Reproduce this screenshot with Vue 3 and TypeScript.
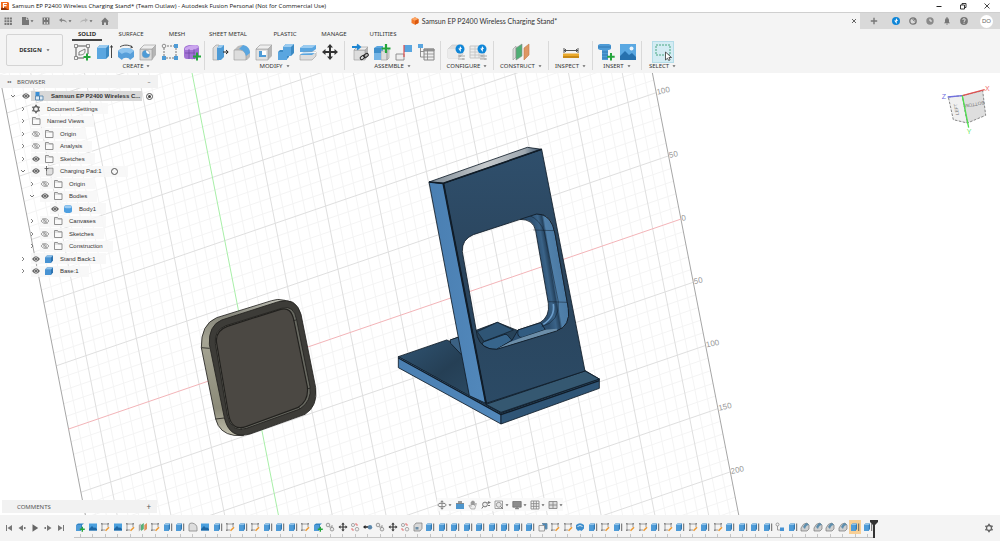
<script setup lang="ts">
import { computed, ref } from 'vue'

interface ToolGroup {
  label: string
  tools: string[]
}
interface TreeNode {
  id: number
  label: string
  depth: number
  icon: string
  caret: 'open' | 'closed' | 'none'
  eye: 'on' | 'off' | 'none'
  radio?: 'on' | 'off'
}
interface Segment {
  x1: number
  y1: number
  x2: number
  y2: number
}

const documentName = 'Samsun EP P2400 Wireless Charging Stand*'

const tabs = ['SOLID', 'SURFACE', 'MESH', 'SHEET METAL', 'PLASTIC', 'MANAGE', 'UTILITIES']
const activeTab = ref('SOLID')

const groups: ToolGroup[] = [
  { label: 'CREATE', tools: ['sketch-new', 'extrude', 'revolve', 'hole', 'pattern', 'form'] },
  { label: 'MODIFY', tools: ['press-pull', 'fillet', 'shell', 'combine', 'split', 'move'] },
  { label: 'ASSEMBLE', tools: ['insert-link', 'component-new', 'joint', 'bom'] },
  { label: 'CONFIGURE', tools: ['config-cube', 'config-table'] },
  { label: 'CONSTRUCT', tools: ['plane'] },
  { label: 'INSPECT', tools: ['measure'] },
  { label: 'INSERT', tools: ['fastener', 'image'] },
  { label: 'SELECT', tools: ['select'] },
]

const nodes: TreeNode[] = [
  { id: 1, label: 'Document Settings', depth: 1, icon: 'gear', caret: 'closed', eye: 'none' },
  { id: 2, label: 'Named Views', depth: 1, icon: 'folder', caret: 'closed', eye: 'none' },
  { id: 3, label: 'Origin', depth: 1, icon: 'folder', caret: 'closed', eye: 'off' },
  { id: 4, label: 'Analysis', depth: 1, icon: 'folder', caret: 'closed', eye: 'off' },
  { id: 5, label: 'Sketches', depth: 1, icon: 'folder', caret: 'closed', eye: 'on' },
  { id: 6, label: 'Charging Pad:1', depth: 1, icon: 'component', caret: 'open', eye: 'on', radio: 'off' },
  { id: 7, label: 'Origin', depth: 2, icon: 'folder', caret: 'closed', eye: 'off' },
  { id: 8, label: 'Bodies', depth: 2, icon: 'folder', caret: 'open', eye: 'on' },
  { id: 9, label: 'Body1', depth: 3, icon: 'body', caret: 'none', eye: 'on' },
  { id: 10, label: 'Canvases', depth: 2, icon: 'folder', caret: 'closed', eye: 'off' },
  { id: 11, label: 'Sketches', depth: 2, icon: 'folder', caret: 'closed', eye: 'off' },
  { id: 12, label: 'Construction', depth: 2, icon: 'folder', caret: 'closed', eye: 'off' },
  { id: 13, label: 'Stand Back:1', depth: 1, icon: 'block', caret: 'closed', eye: 'on' },
  { id: 14, label: 'Base:1', depth: 1, icon: 'block', caret: 'closed', eye: 'on' },
]

const codes: Record<string, string> = {
  n: 't-new', i: 't-image', s: 't-sketch', p: 't-plane', e: 't-extrude', f: 't-round', c: 't-chain',
  m: 't-move', r: 't-chain-red', d: 't-dot', h: 't-shell', o: 't-out', v: 't-revolve', j: 't-rigid', g: 't-fillet',
}
const history = 'nisispseefiesesee' + 'esncmrdcmrh' + 'eeeeeeeee' + 'ossv' + 'esessesesese' + 'eeejeggggee'
const features = computed(() => history.split('').map((c) => codes[c]))
const highlighted = 62

const transport = ['first', 'prev', 'play', 'next', 'last']
const navTools = [
  { icon: 'orbit', menu: true }, { icon: 'look', menu: false }, { icon: 'pan', menu: false },
  { icon: 'zoom', menu: false }, { icon: 'fit', menu: true }, { icon: 'display', menu: true },
  { icon: 'grid', menu: true }, { icon: 'viewports', menu: true },
]

/* Ground plane: origin, one 50 mm step along each axis, and the extents in steps. */
const origin = { x: 249.5, y: 367 }
const u = { x: 50.4, y: -17.28 }
const v = { x: 12.35, y: 63.2 }
const uMin = -3.59
const uMax = 8.56
const vMin = -6
const vMax = 5

function seg(u1: number, v1: number, u2: number, v2: number): Segment {
  return {
    x1: origin.x + u.x * u1 + v.x * v1,
    y1: origin.y + u.y * u1 + v.y * v1,
    x2: origin.x + u.x * u2 + v.x * v2,
    y2: origin.y + u.y * u2 + v.y * v2,
  }
}
const minor: Segment[] = []
const major: Segment[] = []
for (let i = vMin * 5; i <= vMax * 5; i++) {
  if (i !== 0) (i % 5 === 0 ? major : minor).push(seg(uMin, i / 5, uMax, i / 5))
}
for (let i = Math.ceil(uMin * 5); i <= uMax * 5; i++) {
  if (i !== 0) (i % 5 === 0 ? major : minor).push(seg(i / 5, vMin, i / 5, vMax))
}
const xAxis = seg(uMin, 0, uMax, 0)
const yAxis = seg(0, vMin, 0, vMax)
const edges = [seg(uMin, vMin, uMin, vMax), seg(uMax, vMin, uMax, vMax)]
const rulerLabels = [-2, -1, 0, 1, 2, 3, 4].map((n) => {
  const p = seg(uMax, n, uMax, n)
  return { text: String(Math.abs(n * 50)), at: `translate(${p.x1 + 1} ${p.y1 + 2}) rotate(-12)` }
})
</script>

<template>
  <svg class="sprite" aria-hidden="true">
    <symbol id="logo" viewBox="0 0 10 10"><path d="M1 1h7l1 1v7H1z" fill="#f26a1b" /><path d="M1 7l3-1 5 3H1z" fill="#8c3208" /><path d="M3.5 7V2.5H7M3.5 4.7h3" stroke="#fff" stroke-width="1.2" fill="none" /></symbol>
    <symbol id="apps" viewBox="0 0 10 10"><path d="M1.5 1.5h2v2h-2zM4.2 1.5h2v2h-2zM6.9 1.5h2v2h-2zM1.5 4.2h2v2h-2zM4.2 4.2h2v2h-2zM6.9 4.2h2v2h-2zM1.5 6.9h2v2h-2zM4.2 6.9h2v2h-2zM6.9 6.9h2v2h-2z" fill="#777" /></symbol>
    <symbol id="file" viewBox="0 0 10 10"><path d="M2 1h4v3h3v5H2z" fill="#777" /><path d="M6.7 1L9 3.4H6.7z" fill="#777" /></symbol>
    <symbol id="save" viewBox="0 0 10 10"><path d="M1.5 1.5h7v7h-7z" fill="#777" /><path d="M3 2h1v2H3zM6 2h1v2H6zM3 6h1.4v2H3zM5.6 6H7v2H5.600z" fill="#d0d0d0" /></symbol>
    <symbol id="undo" viewBox="0 0 10 10"><path d="M1 4l3-2v1.400c3 0 4.500 1.300 5 3.600C7.800 5.600 6.500 5 4 5v1.400z" fill="#888" /></symbol>
    <symbol id="redo" viewBox="0 0 10 10"><path d="M9 4L6 2v1.400C3 3.400 1.500 4.700 1 7 2.200 5.600 3.500 5 6 5v1.400z" fill="#b5b5b5" /></symbol>
    <symbol id="home" viewBox="0 0 10 10"><path d="M5 1.500l4 4H8V9H6V6.500H4V9H2V5.500H1z" fill="#777" /></symbol>
    <symbol id="caret" viewBox="0 0 4 4"><path d="M.5 1.200h3L2 3.200z" fill="#666" /></symbol>
    <symbol id="min" viewBox="0 0 8 8"><path d="M1.500 4.500h5" stroke="#222" stroke-width="1" /></symbol>
    <symbol id="restore" viewBox="0 0 8 8"><path d="M1.500 3h4v4h-4zM3 3V1.500h4v4H5.500" fill="none" stroke="#222" stroke-width=".9" /></symbol>
    <symbol id="close" viewBox="0 0 8 8"><path d="M1.500 1.500l5 5M6.500 1.500l-5 5" stroke="#333" stroke-width=".9" /></symbol>
    <symbol id="tabclose" viewBox="0 0 8 8"><path d="M2 2l4 4M6 2L2 6" stroke="#555" stroke-width=".9" /></symbol>
    <symbol id="plus" viewBox="0 0 8 8"><path d="M4 .8v6.400M.8 4h6.400" stroke="#777" stroke-width="1.400" /></symbol>
    <symbol id="bolt" viewBox="0 0 10 10"><circle cx="5" cy="5" r="4" fill="#0f86d8" /><path d="M5 2l2 3H5.700v3L3.200 4.600h1.600z" fill="#fff" /></symbol>
    <symbol id="ext" viewBox="0 0 10 10"><circle cx="5" cy="5" r="3.200" fill="none" stroke="#777" stroke-width="1.300" /><path d="M5 5l2-2M3.800 3.200H7V6" stroke="#777" fill="none" stroke-width=".8" /></symbol>
    <symbol id="clock" viewBox="0 0 10 10"><circle cx="5" cy="5" r="3.700" fill="#8a8a8a" /><path d="M5 2.800V5h2" stroke="#eee" fill="none" /></symbol>
    <symbol id="bell" viewBox="0 0 10 10"><path d="M2 7.300l1-1.300V4a2 2 0 0 1 4 0v2l1 1.300zM4 7.800h2L5 9zM4.500 1h1v1h-1z" fill="#777" /></symbol>
    <symbol id="help" viewBox="0 0 10 10"><circle cx="5" cy="5" r="3.900" fill="#777" /><path d="M3.800 4c0-1.800 2.600-1.500 2.400 0C6.100 4.900 5 4.900 5 5.900M5 6.700v1" stroke="#eee" fill="none" /></symbol>
    <symbol id="doc-cube" viewBox="0 0 8 8"><path d="M4 .3l3.500 1.700v4L4 7.800.5 6V2z" fill="#f47a2b" /><path d="M4 .3l3.500 1.700L4 3.800.5 2z" fill="#fba566" /><path d="M4 3.800L7.500 2v4L4 7.800z" fill="#d9580f" /></symbol>

    <symbol id="sketch-new" viewBox="0 0 18 18"><path d="M3 3h12M3 3v12M3 15h8M15 3v8" stroke="#555" fill="none" /><path d="M1.500 1.500h3v3h-3zM13.500 1.500h3v3h-3zM1.500 13.500h3v3h-3z" fill="#f4f4f4" stroke="#666" stroke-width=".7" /><path d="M12 6v2c0 3-2 4-6 4h-.5M6 12V9l6-3" fill="none" stroke="#666" stroke-width=".8" /><path d="M14 10.500v7M10.500 14h7" stroke="#25a53c" stroke-width="2" /></symbol>
    <symbol id="extrude" viewBox="0 0 18 18"><path d="M2 5l3-3h9v11l-3 3H2z" fill="#3b8ac4" /><path d="M2 5h9v11H2z" fill="#5aa6e0" /><path d="M2 5l3-3h9l-3 3z" fill="#9acbf0" /><path d="M16.500 15V3M15.300 4.500l1.200-2 1.200 2" stroke="#333" stroke-width=".9" fill="none" /></symbol>
    <symbol id="revolve" viewBox="0 0 18 18"><path d="M1 8c3-4 13-4 16 0v6l-4 3c-1-3-7-3-8 0l-4-3z" fill="#579fda" /><path d="M1 8c3-4 13-4 16 0l-4 3c-2-2-6-2-8 0z" fill="#8dc4ef" /><path d="M3 4c3-2.500 9-2.500 12 0M14 2.500l1.500 2-2 .3" stroke="#333" stroke-width=".9" fill="none" /></symbol>
    <symbol id="hole" viewBox="0 0 18 18"><path d="M1 6l4-4h12v10l-4 5H1z" fill="#b5b5b5" /><path d="M1 6h12v11H1z" fill="#d9d9d9" stroke="#999" stroke-width=".6" /><path d="M1 6l4-4h12l-4 4z" fill="#eee" stroke="#999" stroke-width=".6" /><circle cx="7" cy="11" r="3.800" fill="#fff" stroke="#888" stroke-width=".6" /><path d="M7 7.200a3.800 3.800 0 1 0 3.800 3.800C8 11 7 10 7 7.200z" fill="#4e9bd6" /></symbol>
    <symbol id="pattern" viewBox="0 0 18 18"><path d="M6 3h7M3 5v8M5 15h8M15 5v8" stroke="#777" stroke-dasharray="2 1" /><path d="M13 1h4v4h-4zM1 13h4v4H1zM13 13h4v4h-4z" fill="#4e9bd6" /><circle cx="3" cy="3" r="1.800" fill="#f4f4f4" stroke="#777" stroke-width=".8" /></symbol>
    <symbol id="form" viewBox="0 0 18 18"><path d="M1 6q0-3 5-4h7q3 0 3 3v8q-4 4-8 3H4q-3 0-3-3z" fill="#a273d4" /><path d="M2 5q4-3 11-3l3 2-5 3H2z" fill="#cba6ee" /><path d="M2 10h10M6 6v10M11 6v10l5-3" stroke="#6f45a5" stroke-width=".7" fill="none" /><path d="M14 9.500v8M10 13.500h8" stroke="#25a53c" stroke-width="2" /></symbol>
    <symbol id="press-pull" viewBox="0 0 18 18"><path d="M2 5l3-3h3v15H2z" fill="#ddd" stroke="#999" stroke-width=".6" /><path d="M6 5l3-3h4v12l-3 3H6z" fill="#4e9bd6" /><path d="M6 5l3-3h4l-3 3z" fill="#9acbf0" /><path d="M12 9h5M15 7l2.200 2L15 11" stroke="#222" fill="none" /></symbol>
    <symbol id="fillet" viewBox="0 0 18 18"><path d="M1 7l4-4 4-1c5 1 8 4 8 9v3l-3 3H1z" fill="#bdbdbd" /><path d="M1 7h5c5 0 7 3 7 7v3H1z" fill="#ddd" stroke="#999" stroke-width=".6" /><path d="M6 6l4-4c5 1 7 4 7 8l-4 3c-1-4-3-6-7-7z" fill="#5aa6e0" /></symbol>
    <symbol id="shell" viewBox="0 0 18 18"><path d="M1 6l4-4h12v11l-4 4H1z" fill="#b5b5b5" /><path d="M1 6h12v11H1z" fill="#e1e1e1" stroke="#999" stroke-width=".6" /><path d="M1 6l4-4h12l-4 4z" fill="#eee" stroke="#999" stroke-width=".6" /><path d="M4 8h7v6H4z" fill="#4e9bd6" /><path d="M7 8h4v4H7z" fill="#fff" /></symbol>
    <symbol id="combine" viewBox="0 0 18 18"><path d="M6 4l3-3h8v9l-3 3h-2v1l-3 3H1V9l2-2h3z" fill="#3b8ac4" /><path d="M6 4h8v9h-4v4H1V9h5z" fill="#5aa6e0" /><path d="M6 4l3-3h8l-3 3z" fill="#9acbf0" /></symbol>
    <symbol id="split" viewBox="0 0 18 18"><path d="M1 5l4-3h12v4l-4 3H1z" fill="#5aa6e0" /><path d="M1 5l4-3h12l-4 3z" fill="#9acbf0" /><path d="M1 12l4-3h12v4l-4 4H1z" fill="#ddd" stroke="#999" stroke-width=".6" /><path d="M1 12l4-3h12l-4 3z" fill="#5aa6e0" /><path d="M1 10l16-.500" stroke="#fff" /></symbol>
    <symbol id="move" viewBox="0 0 18 18"><path d="M9 1l3 3.500h-2V8h3.500V6L17 9l-3.500 3v-2H10v3.500h2L9 17l-3-3.500h2V10H4.500v2L1 9l3.500-3v2H8V4.500H6z" fill="#333" /></symbol>
    <symbol id="insert-link" viewBox="0 0 18 18"><path d="M3 7l3-3h11v9l-3 4H3z" fill="#b5b5b5" /><path d="M3 7h11v10H3z" fill="#ddd" stroke="#999" stroke-width=".6" /><path d="M3 7l3-3h11l-3 3z" fill="#eee" stroke="#999" stroke-width=".6" /><path d="M1 4h7M6 1.500L9 4 6 6.500" stroke="#1e86d2" stroke-width="1.800" fill="none" /><g fill="none" stroke="#222"><rect x="9" y="13" width="5" height="3" rx="1.500" transform="rotate(-35 11.500 14.500)" /><rect x="12.500" y="11" width="5" height="3" rx="1.500" transform="rotate(-35 15 12.500)" /></g></symbol>
    <symbol id="component-new" viewBox="0 0 18 18"><path d="M1 5l3-2h6v6H1z" fill="#5aa6e0" /><path d="M8 8h6v9H8zM14 8l2-1.500V15l-2 2z" fill="#ddd" stroke="#999" stroke-width=".6" /><path d="M1 5h7v5H1z" fill="#3f8fcb" /><path d="M1 10h7v7H1z" fill="#75b5e6" /><path d="M13 1v9M8.500 5.500h9" stroke="#25a53c" stroke-width="2.200" /></symbol>
    <symbol id="joint" viewBox="0 0 18 18"><path d="M9 2h8v7H9z" fill="#5aa6e0" /><path d="M1 11h8v6H1z" fill="#eee" stroke="#888" stroke-width=".9" /><path d="M9 2v12" stroke="#e05050" stroke-width="1.200" /></symbol>
    <symbol id="bom" viewBox="0 0 18 18"><path d="M1 1h5v4H1z" fill="#5aa6e0" /><path d="M3.500 5v9H7M3.500 8.500H7" stroke="#777" fill="none" stroke-width=".8" /><path d="M7 6h10v11H7z" fill="#eee" stroke="#888" /><path d="M7 6h10v2H7zM7 11h10M7 14h10M10.500 6v11" stroke="#888" stroke-width=".8" fill="#999" /></symbol>
    <symbol id="config-cube" viewBox="0 0 18 18"><path d="M1 6l4-4h11v9l-4 4H1z" fill="#ddd" stroke="#c4c4c4" stroke-width=".6" /><path d="M1 6h10v9H1z" fill="#ebebeb" /><path d="M11 13h7M11 16h7M13 12v2M16 15v2" stroke="#999" stroke-width=".8" /><circle cx="13" cy="6" r="4.500" fill="#0f86d8" /><path d="M13 3l2 3h-1.200v3l-2.600-3.500h1.500z" fill="#fff" /></symbol>
    <symbol id="config-table" viewBox="0 0 18 18"><path d="M1 3h14v12H1z" fill="#eee" stroke="#c4c4c4" /><path d="M1 6h14M1 9h14M1 12h14M6 3v12M10 3v12" stroke="#c4c4c4" stroke-width=".9" /><path d="M11 13h7M11 16h7M13 12v2M16 15v2" stroke="#999" stroke-width=".8" /><circle cx="13" cy="6" r="4.500" fill="#0f86d8" /><path d="M13 3l2 3h-1.200v3l-2.600-3.500h1.500z" fill="#fff" /></symbol>
    <symbol id="plane" viewBox="0 0 18 18"><path d="M1 6l3-3v11l-3 3z" fill="#ddd" stroke="#999" stroke-width=".6" /><path d="M4 5l6-4v12l-6 4z" fill="#4fae74" stroke="#888" stroke-width=".6" /><path d="M12 5l5-4v11l-5 5z" fill="#de9663" stroke="#c27a48" stroke-width=".6" /></symbol>
    <symbol id="measure" viewBox="0 0 18 18"><path d="M2 5v5M16 5v5M2 7.500h14M4 6L2.500 7.500 4 9M14 6l1.500 1.500L14 9" stroke="#444" stroke-width=".9" fill="none" /><path d="M1 10.500h16v4.500H1z" fill="#eaa92c" /><path d="M1 13h16v2H1z" fill="#c98a17" /></symbol>
    <symbol id="fastener" viewBox="0 0 18 18"><path d="M1 2l2-1h9l2 1v4l-2 1h-1v10H5V7H3L1 6z" fill="#4e9bd6" /><path d="M5 9h6M5 12h6M5 15h6M1 4h13" stroke="#2b6ea8" stroke-width=".8" /><path d="M14 10v7.500M10.200 13.700h7.500" stroke="#25a53c" stroke-width="2" /></symbol>
    <symbol id="image" viewBox="0 0 18 18"><path d="M1 1h16v16H1z" fill="#5aa8e2" /><path d="M1 13l5-5 4 4 3-2 4 4v3H1z" fill="#2671ae" /><circle cx="12.500" cy="5.500" r="2" fill="#e9f4fc" /></symbol>
    <symbol id="select" viewBox="0 0 18 18"><path d="M2 2h14v10H2z" fill="none" stroke="#4aa680" stroke-dasharray="2 1" /><path d="M11.500 9v8l2-1.800 1.200 2.300 1.400-.7-1.200-2.300H17.500z" fill="#fff" stroke="#333" stroke-width=".8" /></symbol>

    <symbol id="eye-on" viewBox="0 0 10 10"><path d="M1 5q4-5.500 8 0-4 5.500-8 0z" fill="#666" /><circle cx="5" cy="5" r="1.700" fill="#eee" /><circle cx="5" cy="5" r="1" fill="#444" /></symbol>
    <symbol id="eye-off" viewBox="0 0 10 10"><path d="M1 5q4-5 8 0-4 5-8 0z" fill="none" stroke="#909090" stroke-width=".8" /><circle cx="5" cy="5" r="1.400" fill="none" stroke="#909090" stroke-width=".7" /><path d="M2.500 2l5 6" stroke="#909090" stroke-width=".8" /></symbol>
    <symbol id="closed" viewBox="0 0 6 6"><path d="M2 1l2 2-2 2" fill="none" stroke="#666" stroke-width=".8" /></symbol>
    <symbol id="open" viewBox="0 0 6 6"><path d="M1 2l2 2 2-2" fill="none" stroke="#666" stroke-width=".9" /></symbol>
    <symbol id="folder" viewBox="0 0 10 10"><path d="M1.500 8.500v-7h3l.800 1.300h3.700v5.700z" fill="#fafafa" stroke="#777" stroke-width=".8" /><path d="M1.500 3h7" stroke="#999" stroke-width=".5" /></symbol>
    <symbol id="gear" viewBox="0 0 10 10"><circle cx="5" cy="5" r="2.500" fill="none" stroke="#666" stroke-width="1.300" /><path d="M5 .8v1.500M5 7.700v1.500M1.400 2.900l1.300.8M7.300 6.300l1.300.8M1.400 7.100l1.300-.8M7.300 3.700l1.300-.8" stroke="#666" stroke-width="1.700" /></symbol>
    <symbol id="component" viewBox="0 0 10 10"><path d="M2.500 3.500L4 2.200h5v5L7.500 9h-5z" fill="#e0e0e0" stroke="#777" stroke-width=".7" /><path d="M2.500 0v5M.5 2.500h4" stroke="#555" stroke-width=".8" /></symbol>
    <symbol id="body" viewBox="0 0 10 10"><path d="M1 3q0-2 4-2t4 2v4q0 2-4 2T1 7z" fill="#4e9fe0" /><ellipse cx="5" cy="2.800" rx="3.800" ry="1.500" fill="#9dccf2" /></symbol>
    <symbol id="block" viewBox="0 0 10 10"><path d="M1 3.500l2-2h6v5l-2 2.500H1z" fill="#2d73b0" /><path d="M1 3.500h6V9H1z" fill="#4793d3" /><path d="M1 3.500l2-2h6l-2 2z" fill="#8bc1ec" /></symbol>
    <symbol id="root" viewBox="0 0 10 10"><path d="M1.500 1h4v4h-4z" fill="#3a8fd6" /><path d="M1.500 5h4v4h-4zM5.500 5h3.500v4H5.500z" fill="#ddeaf4" stroke="#4b7ea8" stroke-width=".8" /></symbol>

    <symbol id="t-extrude" viewBox="0 0 10 10"><path d="M1 3l1.500-1.500H7V7L5.500 9H1z" fill="#2f78b3" /><path d="M1 3h4.800v6H1z" fill="#4f9cd8" /><path d="M1 3l1.500-1.500H7.200L5.800 3z" fill="#8fc3ea" /><path d="M8.700 9V1.500" stroke="#555" stroke-width=".9" /></symbol>
    <symbol id="t-new" viewBox="0 0 10 10"><path d="M1 3l2-1.500h6L7 3v5H1z" fill="#2f83c4" /><path d="M1 3h5v6H1z" fill="#4f9cd8" /><path d="M7.300 4.800v5M4.800 7.300h5" stroke="#25a53c" stroke-width="1.400" /></symbol>
    <symbol id="t-image" viewBox="0 0 10 10"><path d="M1 1.500h8v7H1z" fill="#4ba0de" /><path d="M1 7l3-3 2 2 1-.7 2 1.700v1.500H1z" fill="#1e67a4" /></symbol>
    <symbol id="t-sketch" viewBox="0 0 10 10"><path d="M2 2h6M2 2v6h3M8 2v3" fill="none" stroke="#888" stroke-width=".8" /><path d="M1 1h1.600v1.600H1zM7.400 1H9v1.600H7.400zM1 7.400h1.600V9H1z" fill="#888" /><path d="M5.500 8.800L9 5.200" stroke="#ec9a35" stroke-width="1.600" /></symbol>
    <symbol id="t-plane" viewBox="0 0 10 10"><path d="M.8 3l2-1.500v6l-2 2z" fill="#aaa" /><path d="M3 3l2.800-2v6L3 9z" fill="#56b078" /><path d="M6.300 3l2.700-2v6L6.300 9z" fill="#dc925d" /></symbol>
    <symbol id="t-round" viewBox="0 0 10 10"><path d="M1 3q0-2 3-2 5 1 5 5v3H1z" fill="#ddd" stroke="#888" stroke-width=".8" /></symbol>
    <symbol id="t-fillet" viewBox="0 0 10 10"><path d="M1 9V6q2-5 6-5l2 2v4L7 9z" fill="#d0d0d0" stroke="#777" stroke-width=".7" /><path d="M3 5q2-4 4-4l2 2q-3 0-4 4z" fill="#5f8fae" /></symbol>
    <symbol id="t-move" viewBox="0 0 10 10"><path d="M5 .5L6.700 2.500H5.600v1.900h1.900V3.300L9.500 5l-2 1.700V5.600H5.600v1.900h1.100L5 9.500 3.300 7.500h1.100V5.600H2.500v1.100L.5 5l2-1.700v1.100h1.900V2.500H3.300z" fill="#333" /></symbol>
    <symbol id="t-chain" viewBox="0 0 10 10"><g fill="#e8e8e8" stroke="#888" stroke-width=".8"><circle cx="3" cy="3" r="1.800" /><circle cx="7" cy="7.200" r="1.800" /><path d="M4 5h3v-2" fill="none" /></g></symbol>
    <symbol id="t-chain-red" viewBox="0 0 10 10"><g fill="#eee" stroke="#999" stroke-width=".8"><circle cx="3" cy="3" r="1.600" /><circle cx="7" cy="7.200" r="1.800" /></g><path d="M5 2h2v2M2 6v2h2" stroke="#e36a6a" fill="none" stroke-width=".9" /></symbol>
    <symbol id="t-dot" viewBox="0 0 10 10"><path d="M0 5l2.500-2v1.300H6v1.400H2.500V7z" fill="#222" /><circle cx="7" cy="5.200" r="2.200" fill="#5b87ab" /></symbol>
    <symbol id="t-shell" viewBox="0 0 10 10"><path d="M1 3.500L3 1h6v5.500L7 9H1z" fill="#d8d8d8" stroke="#777" stroke-width=".7" /><path d="M2.500 5h3v2.500h-3z" fill="#6b8ea7" /></symbol>
    <symbol id="t-out" viewBox="0 0 10 10"><path d="M4 1.500h5V7H7" fill="#4a87b8" stroke="#6b8ea7" /><path d="M1 3.500h5.500V9H1z" fill="#f1f1f1" stroke="#888" stroke-width=".8" /></symbol>
    <symbol id="t-revolve" viewBox="0 0 10 10"><path d="M1 3q4-3.500 8 0v3.500L6.500 9Q5 7.500 3 9L1 6.500z" fill="#3e8ecd" /><path d="M2.500 4.500q2.500-2 5 0" stroke="#d8ebf8" fill="none" /></symbol>
    <symbol id="t-rigid" viewBox="0 0 10 10"><circle cx="2.500" cy="2.500" r="1.500" fill="none" stroke="#888" stroke-width=".8" /><path d="M2.500 4v4H5" fill="none" stroke="#888" stroke-width=".8" /><path d="M5 5.500h4V9H5z" fill="#4793d3" /></symbol>

    <symbol id="first" viewBox="0 0 8 8"><path d="M1 1h1v6H1zM7 1v6L2.500 4z" fill="#777" /></symbol>
    <symbol id="prev" viewBox="0 0 8 8"><path d="M5 1v6L.5 4zM6 3h1.500v2H6z" fill="#777" /></symbol>
    <symbol id="play" viewBox="0 0 8 8"><path d="M1.500.2v7.600L7.200 4z" fill="#666" /></symbol>
    <symbol id="next" viewBox="0 0 8 8"><path d="M3 1v6l4.500-3zM.5 3H2v2H.5z" fill="#777" /></symbol>
    <symbol id="last" viewBox="0 0 8 8"><path d="M6 1h1v6H6zM1 1v6l4.500-3z" fill="#777" /></symbol>

    <symbol id="orbit" viewBox="0 0 10 10"><ellipse cx="5" cy="5" rx="4.200" ry="1.800" fill="none" stroke="#777" stroke-width=".9" /><path d="M5 .8v8.400M3.500 2.300L5 .8l1.500 1.500M3.500 7.700L5 9.200l1.500-1.500" stroke="#777" fill="none" stroke-width=".9" /></symbol>
    <symbol id="look" viewBox="0 0 10 10"><path d="M1 3.500h8V9H1z" fill="#4e96cd" /><path d="M3 1h4v2.500H3z" fill="#999" /><path d="M1 3.500h8" stroke="#777" stroke-width=".8" /></symbol>
    <symbol id="pan" viewBox="0 0 10 10"><path d="M3 9L.8 5.500l1-.3L3 6.500V2.200h.8V5V1.200h.9V5 1h.9v4V1.800h.9V5.500l1-2h.9L7.300 7.300 6.800 9z" fill="#eee" stroke="#888" stroke-width=".6" /></symbol>
    <symbol id="zoom" viewBox="0 0 10 10"><circle cx="4" cy="4.500" r="2.400" fill="#eee" stroke="#777" /><path d="M2.300 6.300L.8 8.500M7.800 1v3M6.500 2.500h3M7 5.500h2" stroke="#777" /></symbol>
    <symbol id="fit" viewBox="0 0 10 10"><path d="M1 1h7.500v7.500H1z" fill="none" stroke="#888" stroke-width=".8" /><circle cx="4.800" cy="4.800" r="2.500" fill="#e5e5e5" stroke="#888" stroke-width=".8" /><path d="M6.500 6.500L9 9" stroke="#777" /></symbol>
    <symbol id="display" viewBox="0 0 10 10"><path d="M.8 1.500h8.400v5.700H.8z" fill="#8c8c8c" stroke="#666" stroke-width=".7" /><path d="M3 8.700h4M5 7v2" stroke="#777" /></symbol>
    <symbol id="grid" viewBox="0 0 10 10"><path d="M1 1h8v8H1zM1 3.700h8M1 6.300h8M3.700 1v8M6.300 1v8" stroke="#888" stroke-width=".9" fill="none" /></symbol>
    <symbol id="viewports" viewBox="0 0 10 10"><path d="M1 1.500h8v7H1z" fill="#ddd" stroke="#888" stroke-width=".9" /><path d="M1 5h8M5 1.500v7" stroke="#888" stroke-width=".9" /></symbol>
  </svg>

  <div class="shell-window">
    <header class="titlebar">
      <svg class="ic10"><use href="#logo" /></svg>
      <h1>Samsun EP P2400 Wireless Charging Stand* (Team Outlaw) - Autodesk Fusion Personal (Not for Commercial Use)</h1>
      <div class="window-buttons">
        <button aria-label="Minimize"><svg class="ic8"><use href="#min" /></svg></button>
        <button aria-label="Restore"><svg class="ic8"><use href="#restore" /></svg></button>
        <button aria-label="Close window"><svg class="ic8"><use href="#close" /></svg></button>
      </div>
    </header>

    <div class="docbar">
      <div class="quick">
        <button aria-label="Data panel"><svg class="ic10"><use href="#apps" /></svg></button>
        <button aria-label="File"><svg class="ic10"><use href="#file" /></svg><svg class="ic4"><use href="#caret" /></svg></button>
        <button aria-label="Save"><svg class="ic10"><use href="#save" /></svg></button>
        <button aria-label="Undo"><svg class="ic10"><use href="#undo" /></svg><svg class="ic4"><use href="#caret" /></svg></button>
        <button aria-label="Redo"><svg class="ic10"><use href="#redo" /></svg><svg class="ic4"><use href="#caret" /></svg></button>
        <button aria-label="Home"><svg class="ic10"><use href="#home" /></svg></button>
      </div>
      <div class="doctab">
        <div class="docname"><svg class="ic8"><use href="#doc-cube" /></svg><span>{{ documentName }}</span></div>
        <button aria-label="Close document"><svg class="ic8"><use href="#tabclose" /></svg></button>
      </div>
      <div class="account">
        <button class="new-doc" aria-label="New document"><svg class="ic8"><use href="#plus" /></svg></button>
        <button v-for="i in ['bolt', 'ext', 'clock', 'bell', 'help']" :key="i" :aria-label="i">
          <svg class="ic10"><use :href="'#' + i" /></svg>
        </button>
        <button class="avatar">DO</button>
      </div>
    </div>

    <div class="ribbon">
      <button class="workspace">DESIGN <svg class="ic4"><use href="#caret" /></svg></button>
      <div class="ribbon-body">
        <nav class="tabs">
          <button v-for="t in tabs" :key="t" :class="{ active: t === activeTab }" @click="activeTab = t">{{ t }}</button>
        </nav>
        <div class="groups">
          <section v-for="g in groups" :key="g.label" class="group">
            <div class="tools">
              <button v-for="t in g.tools" :key="t" :aria-label="t" :class="{ chosen: t === 'select' }">
                <svg><use :href="'#' + t" /></svg>
              </button>
            </div>
            <button class="group-label">{{ g.label }} <svg class="ic4"><use href="#caret" /></svg></button>
          </section>
        </div>
      </div>
    </div>

    <main class="viewport">
      <svg class="scene" viewBox="0 73 1000 442" preserveAspectRatio="xMinYMin slice">
        <defs>
          <linearGradient id="front" x1="0" y1="0" x2="0" y2="1"><stop offset="0" stop-color="#2f4f6c" /><stop offset=".5" stop-color="#2a445c" /><stop offset="1" stop-color="#2b4a65" /></linearGradient>
          <linearGradient id="base" x1="0" y1="0" x2="1" y2=".6"><stop offset="0" stop-color="#335a7b" /><stop offset=".4" stop-color="#253f55" /><stop offset="1" stop-color="#355a78" /></linearGradient>
          <linearGradient id="topface" x1="0" y1="0" x2="1" y2="0"><stop offset="0" stop-color="#7e8b96" /><stop offset=".5" stop-color="#c5c9cc" /><stop offset=".85" stop-color="#9fa8b0" /><stop offset="1" stop-color="#35506a" /></linearGradient>
          <linearGradient id="rim" gradientUnits="userSpaceOnUse" x1="450" y1="400" x2="510" y2="390"><stop offset="0" stop-color="#2c4f70" /><stop offset=".35" stop-color="#3a6388" /><stop offset=".55" stop-color="#25425d" /><stop offset=".65" stop-color="#5080aa" /><stop offset="1" stop-color="#4c7ba5" /></linearGradient>
          <linearGradient id="side" x1="0" y1="0" x2="1" y2="0"><stop offset="0" stop-color="#4a7fb2" /><stop offset="1" stop-color="#5288bb" /></linearGradient>
          <linearGradient id="padside" x1="0" y1="0" x2="0" y2="1"><stop offset="0" stop-color="#c0c1b6" /><stop offset=".12" stop-color="#85857a" /><stop offset=".3" stop-color="#a6a594" /><stop offset=".8" stop-color="#8c8b79" /><stop offset="1" stop-color="#c1bfae" /></linearGradient>
        </defs>
        <g class="minor"><line v-for="(l, i) in minor" :key="i" v-bind="l" /></g>
        <g class="major"><line v-for="(l, i) in major" :key="i" v-bind="l" /></g>
        <g class="edge"><line v-for="(l, i) in edges" :key="i" v-bind="l" /></g>
        <line class="x-axis" v-bind="xAxis" />
        <line class="y-axis" v-bind="yAxis" />
        <g class="ruler"><text v-for="(r, i) in rulerLabels" :key="i" :transform="r.at">{{ r.text }}</text></g>

        <g transform="translate(190 285) scale(.33333)" stroke="#22211e" stroke-width="2.500" stroke-linejoin="round">
          <path d="M34 188Q32 118 80 98L245 47Q262 40 285 46L320 80 160 452 132 451Q88 445 77 402z" fill="url(#padside)" />
          <path d="M34 188l25 2M77 402l26-3" fill="none" />
          <path d="M58 178Q55 122 95 105L265 50Q318 35 333 88L377 308Q384 364 345 388L180 447Q118 464 103 398z" fill="#3d3c38" />
          <path d="M76 175Q72 136 108 122L275 70Q312 58 320 105L360 305Q366 348 330 372L170 430Q124 446 112 390z" fill="#686961" />
          <path d="M80 175Q74 138 112 124L272 73Q304 64 312 108L352 305Q357 346 325 367L170 424Q126 440 116 390z" fill="#4b4843" stroke-width="3.500" />
          <path d="M318 105l-8 2M360 310l-8 1M330 372l-5-7M155 434l-3-6" fill="none" />
        </g>

        <g transform="translate(390 140) scale(.33333)" stroke="#101c28" stroke-width="2.500" stroke-linejoin="round">
          <path d="M25 650L170 600 206 616 182 600 322 547 384 572 628 717 333 820z" fill="url(#base)" />
          <path d="M180 600l30-10 10 60-38-40z" fill="#3b6183" />
          <path d="M25 650L333 820V852L25 683z" fill="url(#side)" />
          <path d="M333 820L628 717V745L333 852z" fill="#2f5576" />
          <path d="M288 793L585 693 628 717 333 817z" fill="#355871" />
          <path d="M25 654L333 824 628 722" fill="none" stroke-width="4" />
          <path d="M262 575L322 547 370 570 340 582 282 604z" fill="#2f5575" stroke-width="2" />
          <path d="M280 606L345 583Q352 582 356 590L366 601 320 628Q292 630 276 612z" fill="#37658c" />
          <path d="M390 238Q430 218 452 222 486 232 495 280L535 505Q543 558 500 573L320 628 366 601 384 570 450 548Q480 530 475 490L437 272Q430 238 390 238z" fill="url(#rim)" />
          <path d="M384 570L452 548 466 569 398 592Q380 595 384 570z" fill="#315b80" />
          <path d="M360 606L398 592 466 569 500 566 502 572 320 628z" fill="#6c8ea9" stroke="none" />
          <path d="M490 492Q496 530 460 553" fill="none" stroke="#6c9ecb" stroke-width="5" />
          <path d="M418 226Q450 240 463 275L505 485Q510 545 455 560M430 270L494 272M476 485L532 487" fill="none" stroke-width="1.500" />
          <path d="M160 130L455 28 585 693 288 790zM217 335L262 590Q275 629 320 628L500 573Q543 558 535 505L495 280Q485 220 440 222L250 284Q215 298 217 335z" fill="url(#front)" fill-rule="evenodd" />
          <path d="M117 126L160 130 288 790 238 767z" fill="url(#side)" />
          <path d="M160 130L288 790" stroke-width="6" />
          <path d="M117 126L412 22 455 28 160 130z" fill="url(#topface)" />
          <path d="M117 126L160 130 455 28" fill="none" stroke-width="5" />
        </g>
      </svg>

      <svg class="viewcube" viewBox="840 250 156 156">
        <path d="M865 292L907 288 922 370 880 360z" fill="#f0f0f0" stroke="#888" stroke-width="3" stroke-dasharray="8 4" />
        <path d="M907 288L968 273 977 347 922 370z" fill="#dedede" stroke="#888" stroke-width="3" stroke-dasharray="8 4" />
        <text transform="translate(897 345) rotate(-100)" class="face">LEFT</text>
        <text transform="translate(972 304) rotate(170)" class="face">BOTTOM</text>
        <path d="M907 288L863 292" stroke="#7070e0" stroke-width="4" />
        <path d="M907 288L974 270" stroke="#e05050" stroke-width="4" />
        <path d="M907 288L926 384" stroke="#4ee04e" stroke-width="4" />
        <text x="975" y="275" fill="#f07070">X</text>
        <text x="845" y="299" fill="#7070e0">Z</text>
        <text x="920" y="404" fill="#70e870">Y</text>
      </svg>

      <aside class="browser">
        <div class="panel-head">
          <button aria-label="Collapse">◂◂</button>
          <h2>BROWSER</h2>
          <button aria-label="Minimise browser">–</button>
        </div>
        <ul class="tree">
          <li class="root">
            <button aria-label="Toggle"><svg class="ic6"><use href="#open" /></svg></button>
            <button aria-label="Visibility"><svg class="ic10"><use href="#eye-on" /></svg></button>
            <span class="root-chip"><svg class="ic10"><use href="#root" /></svg><b>Samsun EP P2400 Wireless C...</b></span>
            <span class="radio on"></span>
          </li>
          <li v-for="n in nodes" :key="n.id" :class="'depth' + n.depth">
            <button v-if="n.caret !== 'none'" aria-label="Toggle"><svg class="ic6"><use :href="'#' + n.caret" /></svg></button>
            <span v-else class="ic6"></span>
            <span class="chip">
              <button v-if="n.eye !== 'none'" aria-label="Visibility"><svg class="ic10"><use :href="'#eye-' + n.eye" /></svg></button>
              <svg class="ic10"><use :href="'#' + n.icon" /></svg>
              <span class="node-label">{{ n.label }}</span>
              <span v-if="n.radio" class="radio"></span>
            </span>
          </li>
        </ul>
      </aside>

      <section class="comments">
        <h2>COMMENTS</h2>
        <button aria-label="Add comment">+</button>
      </section>

      <div class="navbar">
        <button v-for="n in navTools" :key="n.icon" :aria-label="n.icon">
          <svg class="ic10"><use :href="'#' + n.icon" /></svg><svg v-if="n.menu" class="ic4"><use href="#caret" /></svg>
        </button>
      </div>
    </main>

    <footer class="timeline">
      <div class="transport">
        <button v-for="t in transport" :key="t" :aria-label="t"><svg class="ic8"><use :href="'#' + t" /></svg></button>
      </div>
      <ol class="features">
        <li v-for="(f, i) in features" :key="i" :class="{ lit: i === highlighted }">
          <button :aria-label="f"><svg class="ic10"><use :href="'#' + f" /></svg></button>
        </li>
      </ol>
      <svg class="marker" viewBox="0 0 8 18"><path d="M0 0h8v2L5 5v13H3V5L0 2z" fill="#333" /></svg>
      <button class="settings" aria-label="Timeline settings"><svg class="ic10"><use href="#gear" /></svg></button>
    </footer>
  </div>
</template>

<style>
body {
  margin: 0;
}
</style>

<style scoped>
.sprite {
  position: absolute;
  width: 0;
  height: 0;
}
.shell-window {
  display: flex;
  flex-direction: column;
  min-height: 100vh;
  background: #fff;
  color: #333;
  font: 6px/8px "Liberation Sans", Arial, sans-serif;
}
button {
  display: flex;
  align-items: center;
  justify-content: center;
  margin: 0;
  padding: 0;
  border: 0;
  background: none;
  color: inherit;
  font: inherit;
}
svg {
  display: block;
  flex: none;
}
h1,
h2 {
  margin: 0;
  font-size: inherit;
  font-weight: normal;
}
.ic4 { width: 4px; height: 4px; }
.ic6 { width: 6px; height: 6px; }
.ic8 { width: 8px; height: 8px; }
.ic10 { width: 10px; height: 10px; }

.titlebar {
  display: flex;
  align-items: center;
  gap: 2px;
  height: 12px;
  border-bottom: 1px solid #cfcfcf;
  background: #fff;
}
.titlebar h1 {
  flex: 1;
  color: #111;
  font: 6px/10px "Open Sans", "Noto Sans", sans-serif;
}
.window-buttons {
  display: flex;
  gap: 16px;
  padding-right: 9px;
}

.docbar {
  display: flex;
  height: 16px;
  background: #d9d9d9;
}
.quick {
  display: flex;
  align-items: center;
  gap: 7px;
  width: 115px;
  padding-left: 3px;
}
.doctab {
  display: flex;
  flex: 1;
  align-items: center;
  padding-right: 2px;
  background: #f4f4f4;
}
.docname {
  display: flex;
  flex: 1;
  align-items: center;
  justify-content: center;
  gap: 3px;
}
.docname span {
  font: 7px/8px Lato, "Liberation Sans", sans-serif;
}
.account {
  display: flex;
  align-items: center;
  gap: 7px;
  width: 123px;
  padding: 0 7px 0 10px;
}
.new-doc { margin-right: 6px; }
.avatar {
  width: 13px;
  height: 13px;
  margin-left: auto;
  border-radius: 50%;
  background: #fff;
  color: #666;
}

.ribbon {
  display: flex;
  height: 44px;
  background: #f4f4f4;
}
.workspace {
  gap: 4px;
  width: 57px;
  height: 32px;
  margin: 5px 6px 0 6px;
  border: 1px solid #d4d4d4;
  border-radius: 2px;
  font: bold 6px/8px "Noto Sans", sans-serif;
}
.ribbon-body {
  display: flex;
  flex: 1;
  flex-direction: column;
}
.tabs {
  display: grid;
  grid-template-columns: 30px 58px 34px 68px 46px 52px 46px;
  height: 12px;
  padding-left: 3px;
  font: 6px/8px "Noto Sans", sans-serif;
}
.tabs button { border-bottom: 2px solid transparent; }
.tabs .active {
  border-color: #444;
  font-weight: bold;
}
.groups {
  display: grid;
  grid-template-columns: 136px 140px 96px 53px 55px 44px 49px 41px;
  height: 32px;
}
.group {
  display: flex;
  flex-direction: column;
  align-items: center;
  height: 29px;
  border-right: 1px solid #d9d9d9;
}
.group:last-child { border-right: 0; }
.tools {
  display: flex;
  gap: 4px;
  align-items: center;
  height: 21px;
}
.tools button,
.tools svg {
  width: 18px;
  height: 18px;
}
.tools .chosen {
  width: 20px;
  height: 20px;
  background: #d3ecf3;
  outline: 1px solid #b4dce8;
}
.group-label {
  gap: 3px;
  font: 6px/8px "Noto Sans", sans-serif;
}

.viewport {
  position: relative;
  display: flex;
  flex: 1;
  flex-direction: column;
  justify-content: space-between;
  overflow: hidden;
}
.scene {
  position: absolute;
  inset: 0;
  width: 100%;
  height: 100%;
}
.minor { stroke: #f4f4f4; }
.major { stroke: #dfdfdf; }
.edge { stroke: #a6a6a6; }
.x-axis { stroke: #f3b4b8; }
.y-axis { stroke: #a8efa8; }
.ruler {
  fill: #999;
  font: 8px "Liberation Sans", sans-serif;
}
.viewcube {
  position: absolute;
  top: 10px;
  right: 8px;
  width: 52px;
  height: 52px;
  font: 21px "Liberation Sans", sans-serif;
}
.face {
  fill: #777;
  font-size: 14px;
}
.browser {
  position: relative;
  width: 158px;
  padding-top: 2px;
}
.panel-head,
.comments {
  display: flex;
  align-items: center;
  height: 13px;
  background: #f2f2f2;
  color: #555;
  font: 6px/8px "Noto Sans", sans-serif;
}
.panel-head h2 { flex: 1; }
.panel-head button:first-child {
  width: 17px;
  font-size: 4px;
}
.panel-head button:last-child { width: 18px; }
.tree {
  display: grid;
  grid-auto-rows: 12px 13px;
  margin: 0;
  padding: 2px 0 0;
  list-style: none;
}
.tree li {
  display: flex;
  align-items: center;
  gap: 4px;
}
.tree .root { padding-left: 10px; }
.tree .depth1 { padding-left: 20px; }
.tree .depth2 { padding-left: 29px; }
.tree .depth3 { padding-left: 39px; }
.root-chip {
  display: flex;
  align-items: center;
  gap: 7px;
  height: 10px;
  padding: 0 2px 0 3px;
  background: #d8d8d8;
}
.root > button:nth-child(2) { margin: 0 -4px 0 1px; }
.chip {
  display: flex;
  align-items: center;
  gap: 3px;
  height: 11px;
  margin-left: 1px;
  padding-right: 10px;
  background: rgba(247, 247, 247, 0.85);
}
.node-label { padding-left: 3px; }
.radio {
  display: flex;
  align-items: center;
  justify-content: center;
  box-sizing: border-box;
  width: 7px;
  height: 7px;
  border: 1px solid #555;
  border-radius: 50%;
}
.chip .radio { margin-left: 6px; }
.radio.on::after {
  width: 3px;
  height: 3px;
  border-radius: 50%;
  background: #444;
  content: "";
}
.comments {
  position: relative;
  justify-content: space-between;
  width: 134px;
  margin: 0 0 2px 2px;
  padding: 0 6px 0 15px;
}
.comments button { font-size: 8px; }
.navbar {
  position: absolute;
  bottom: 4px;
  left: 50%;
  display: flex;
  align-items: center;
  gap: 3px;
  height: 13px;
  transform: translateX(-50%);
  background: rgba(248, 248, 248, 0.9);
}
.navbar button { gap: 1px; }

.timeline {
  display: flex;
  align-items: flex-start;
  height: 26px;
  background: #f4f4f4;
}
.transport {
  display: flex;
  gap: 5px;
  width: 69px;
  padding: 9px 0 0 5px;
}
.features {
  display: grid;
  grid-template-columns: repeat(32, 12px 13px);
  margin: 5px 0 0;
  padding: 0;
  list-style: none;
}
.features li {
  display: flex;
  flex-direction: column;
  align-items: center;
  border-bottom: 1px solid #c4c4c4;
}
.features li::after {
  width: 1px;
  height: 3px;
  background: #c4c4c4;
  content: "";
}
.features button {
  width: 12px;
  height: 14px;
}
.features .lit button { background: #f8cf95; }
.marker {
  width: 8px;
  height: 18px;
  margin: 5px 0 0 -4px;
}
.settings {
  margin: 8px 6px 0 auto;
}
</style>
